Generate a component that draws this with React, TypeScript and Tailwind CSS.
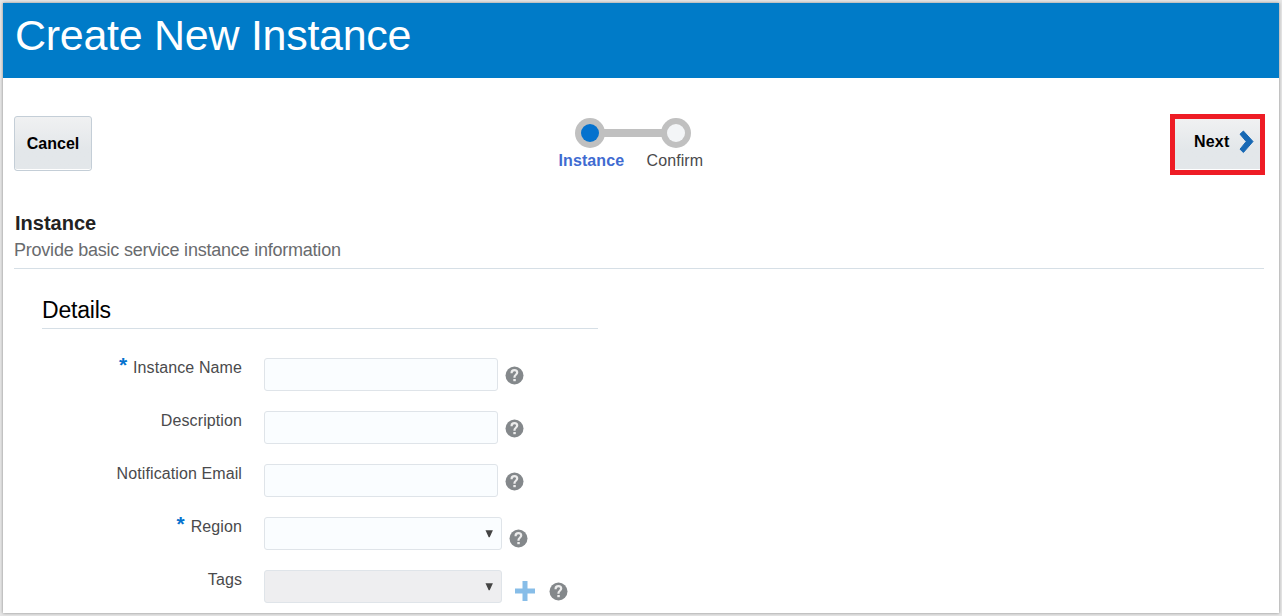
import React from "react";

function HelpIcon({ className = "" }: { className?: string }) {
  return (
    <svg className={`shrink-0 ${className}`} width="19" height="19" viewBox="0 0 19 19" aria-hidden="true">
      <circle cx="9.5" cy="9.5" r="9" fill="#84888b" />
      <path
        d="M6.6 7.2V6.8C6.6 5.1 7.8 4.2 9.4 4.2S12.2 5.1 12.2 6.6C12.2 8.7 9.5 8.8 9.5 11V11.7"
        fill="none"
        stroke="#ececec"
        strokeWidth="2.2"
      />
      <rect x="8.3" y="13" width="2.5" height="2.2" fill="#ececec" />
    </svg>
  );
}

function Row({
  label,
  required = false,
  children,
}: {
  label: string;
  required?: boolean;
  children: React.ReactNode;
}) {
  return (
    <div className="flex h-[33px] items-start">
      <div className="flex w-[239px] justify-end pt-px text-[16px] leading-[18px] tracking-[0.1px] text-[#4a4a4c]">
        {required && (
          <span className="-mt-[6px] mr-[6px] text-[21px] leading-[24px] font-bold tracking-normal text-[#0572ce]">*</span>
        )}
        <span>{label}</span>
      </div>
      <div className="ml-[22px] flex h-[33px] items-start">{children}</div>
    </div>
  );
}

function TextInput({ name }: { name: string }) {
  return (
    <>
      <input
        aria-label={name}
        className="h-[33px] w-[234px] rounded-[3px] border border-[#dfe4e9] bg-[#fafdff] px-2 text-[16px] outline-none"
      />
      <HelpIcon className="mt-[8px] ml-[7px]" />
    </>
  );
}

function SelectBox({ disabled = false }: { disabled?: boolean }) {
  return (
    <button
      type="button"
      disabled={disabled}
      className={`flex h-[33px] w-[238px] items-start justify-end rounded-[3px] border border-[#dfe4e9] pt-[12px] pr-[8px] ${
        disabled ? "bg-[#eeeef0]" : "bg-[#fafdff]"
      }`}
    >
      <svg width="8" height="8" viewBox="0 0 8 8" aria-hidden="true">
        <path d="M0.5 0.2H7.9L4.7 7.3H3.7Z" fill="#444" />
      </svg>
    </button>
  );
}

export default function App() {
  return (
    <div className="h-[616px] w-[1282px] overflow-hidden bg-[#e6e6e6] p-[3px] font-['Liberation_Sans',Arial,sans-serif]">
      <div className="flex h-[610px] w-[1276px] flex-col bg-white shadow-[0_0_3px_0_#888]">
        <header className="h-[75px] bg-[#007bc8] pl-[12px]">
          <h1 className="pt-[8px] text-[43px] leading-[48px] font-normal tracking-[-0.28px] text-white">Create New Instance</h1>
        </header>

        <div className="flex h-[101px] items-start justify-between pt-[36px] pr-[14px] pl-[11px]">
          <button
            type="button"
            className="mt-[2px] h-[55px] w-[78px] rounded-[3px] border border-[#c4ced7] bg-linear-to-b from-[#f0f1f2] to-[#e3e7ea] to-60% text-[16px] font-bold text-black shadow-[inset_0_-1px_0_#fff]"
          >
            Cancel
          </button>

          <div className="mt-[4px] -mr-px flex w-[150px] flex-col">
            <svg className="ml-[18px]" width="118" height="30" viewBox="0 0 118 30" aria-hidden="true">
              <rect x="26" y="11" width="64" height="8" fill="#c0c0c0" />
              <circle cx="15" cy="15" r="15" fill="#c0c0c0" />
              <circle cx="15" cy="15" r="9" fill="#0572ce" />
              <circle cx="101" cy="15" r="15" fill="#c0c0c0" />
              <circle cx="101" cy="15" r="9" fill="#f3f5f7" />
            </svg>
            <div className="mt-[4px] flex text-[16px] leading-[18px]">
              <span className="w-[90px] pl-[2px] font-bold tracking-[0.1px] text-[#3f6bd1]">Instance</span>
              <span className="tracking-[0.1px] text-[#4a4a4c]">Confirm</span>
            </div>
          </div>

          <button
            type="button"
            className="flex h-[61px] w-[95px] items-start border-[5px] border-[#ee1c25] bg-linear-to-b from-[#f0f1f2] to-[#e3e7ea] to-60% pt-[11px] pl-[19px] text-[16px] leading-[24px] font-bold text-black shadow-[inset_0_-1px_0_#fff]"
          >
            <span className="w-[45px] text-left tracking-[0.2px]">Next</span>
            <svg className="shrink-0" width="15" height="24" viewBox="0 0 15 24" aria-hidden="true">
              <path
                d="M1 4.2L4.4 1L14 11.5L4.4 22.5L1 19.2L7.2 11.5Z"
                fill="#1768b4"
                stroke="#1768b4"
                strokeWidth="1"
                strokeLinejoin="round"
              />
            </svg>
          </button>
        </div>

        <section className="mr-[15px] ml-[11px] h-[90px] border-b border-[#d6dfe6] pt-[33px]">
          <h2 className="pl-px text-[20px] leading-[22px] font-bold text-[#222]">Instance</h2>
          <p className="mt-[6px] text-[18px] leading-[20px] tracking-[-0.225px] text-[#696b6e]">
            Provide basic service instance information
          </p>
        </section>

        <section className="mt-[28px] ml-[39px] h-[32px] w-[556px] border-b border-[#d6dfe6]">
          <h3 className="text-[23px] leading-[26px] font-normal tracking-[-0.2px] text-black">Details</h3>
        </section>

        <form className="mt-[29px] flex flex-col gap-[20px]">
          <Row label="Instance Name" required>
            <TextInput name="Instance Name" />
          </Row>
          <Row label="Description">
            <TextInput name="Description" />
          </Row>
          <Row label="Notification Email">
            <TextInput name="Notification Email" />
          </Row>
          <Row label="Region" required>
            <SelectBox />
            <HelpIcon className="mt-[12px] ml-[7px]" />
          </Row>
          <Row label="Tags">
            <SelectBox disabled />
            <svg className="mt-[11px] ml-[13px]" width="20" height="20" viewBox="0 0 20 20" aria-hidden="true">
              <path d="M7.5 0H12.5V7.5H20V12.5H12.5V20H7.5V12.5H0V7.5H7.5Z" fill="#87bde8" />
            </svg>
            <HelpIcon className="mt-[12px] ml-[14px]" />
          </Row>
        </form>
      </div>
    </div>
  );
}
